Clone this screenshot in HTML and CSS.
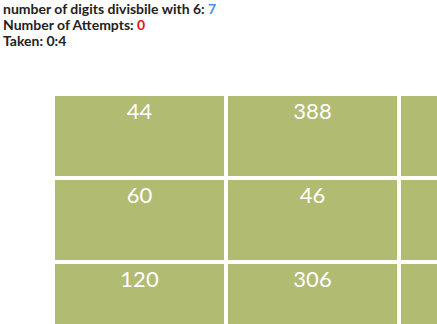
FILE: index.html
```html
<!DOCTYPE html>
<html>
<head>
<meta charset="utf-8">
<link rel="stylesheet" href="styles.css">
</head>
<body>
<div class="info">
  <div class="line">number of digits divisbile with 6: <span class="blue">7</span></div>
  <div class="line">Number of Attempts: <span class="red">0</span></div>
  <div class="line">Taken: 0:4</div>
</div>
<div class="grid">
  <div class="cell">44</div>
  <div class="cell">388</div>
  <div class="cell"></div>
  <div class="cell">60</div>
  <div class="cell">46</div>
  <div class="cell"></div>
  <div class="cell">120</div>
  <div class="cell">306</div>
  <div class="cell"></div>
</div>
</body>
</html>
```
FILE: styles.css
```css
html, body {
  margin: 0;
  padding: 0;
  overflow: hidden;
}
body {
  font-family: "Lato", "Open Sans", sans-serif;
  color: #222;
}
.info {
  padding: 1px 3px 0;
  font-weight: bold;
  font-size: 14px;
  line-height: 16px;
}
.blue { color: #4a90e2; }
.red { color: #f01010; }
.grid {
  margin: 45px 0 0 53px;
  display: grid;
  grid-template-columns: repeat(3, 173px);
  width: 519px;
}
.cell {
  margin: 2px;
  height: 80px;
  background: #b1bb71;
  color: #fff;
  text-align: center;
  font-size: 22px;
  line-height: 30px;
}
```
